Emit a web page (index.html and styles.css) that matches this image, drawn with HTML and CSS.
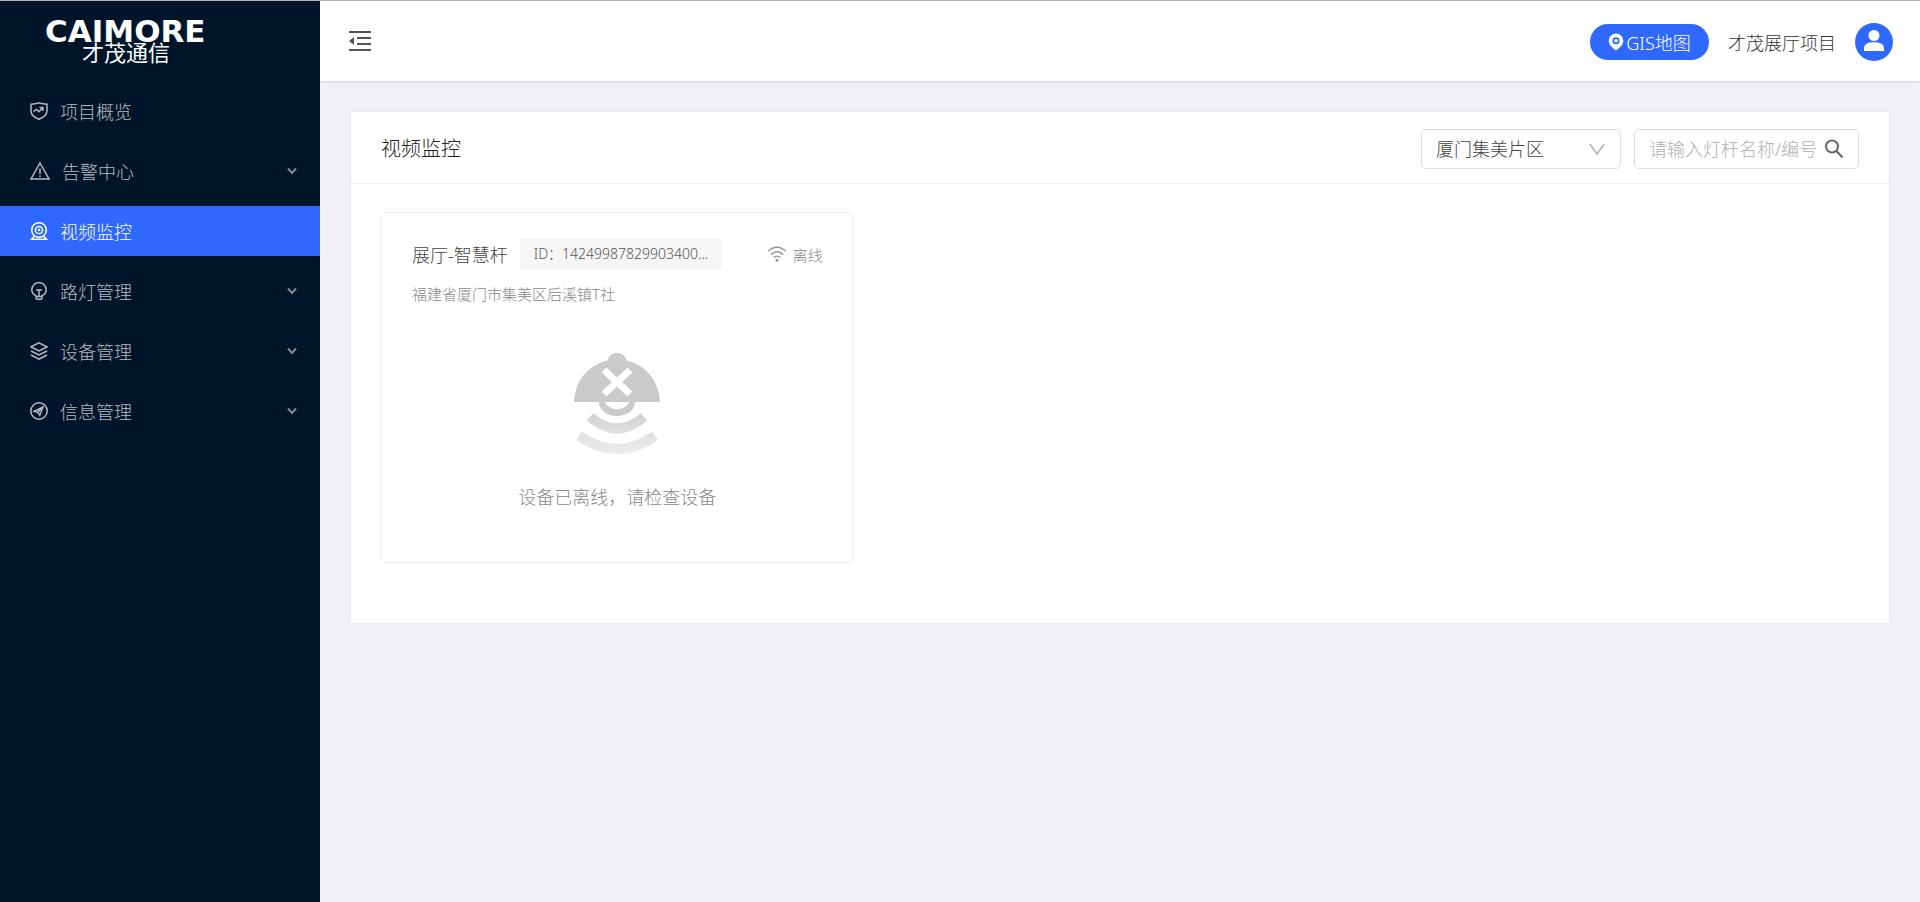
FILE: index.html
```html
<!DOCTYPE html>
<html lang="zh-CN">
<head>
<meta charset="utf-8">
<title>视频监控</title>
<meta name="viewport" content="width=device-width, initial-scale=1">
<link rel="stylesheet" href="styles.css">
</head>
<body>
<div class="app">
  <aside class="sidebar">
    <div class="brand">
      <span class="brand-name">CAIMORE</span>
      <span class="brand-sub">才茂通信</span>
    </div>
    <nav class="menu">
      <a class="menu-item" href="#">
        <svg class="menu-icon" viewBox="0 0 18 18"><path d="M1 2.2Q5.500 2 9 .9Q12.500 2 17 2.200V9C17 13 13 15.800 9 17.200C5 15.800 1 13 1 9Z"/><path d="M3.500 9.500L6.500 7.500L9 9.800L12.500 5.800M9.500 5.500H12.900V9"/></svg>
        <span class="menu-text">项目概览</span>
      </a>
      <a class="menu-item" href="#">
        <svg class="menu-icon menu-icon-wide" viewBox="0 0 20 18"><path d="M10 1L19 17H1Z"/><path d="M10 6.500V12M10 13.300V15"/></svg>
        <span class="menu-text">告警中心</span>
        <svg class="menu-arrow" viewBox="0 0 10 8"><path d="M1 1.500L5 6L9 1.500"/></svg>
      </a>
      <a class="menu-item active" href="#">
        <svg class="menu-icon" viewBox="0 0 18 18"><circle cx="9" cy="8" r="7.300"/><circle cx="9" cy="8" r="3.600"/><path d="M8.800 6.500V8.300H10.300M4.500 14L1.500 17.200H16.500L13.500 14"/></svg>
        <span class="menu-text">视频监控</span>
      </a>
      <a class="menu-item" href="#">
        <svg class="menu-icon" viewBox="0 0 18 18"><path d="M6 13.800C3.300 12.600 1.800 10.400 1.800 7.700A7.200 7.100 0 0 1 16.200 7.700C16.200 10.400 14.700 12.600 12 13.800V16Q12 17.300 10.500 17.300H7.500Q6 17.300 6 16ZM6 14.600H12M6 8H12M9 8V14"/></svg>
        <span class="menu-text">路灯管理</span>
        <svg class="menu-arrow" viewBox="0 0 10 8"><path d="M1 1.500L5 6L9 1.500"/></svg>
      </a>
      <a class="menu-item" href="#">
        <svg class="menu-icon" viewBox="0 0 18 18"><path d="M9 .8L17 4.900L9 9L1 4.900ZM1 9L9 13L17 9M1 13L9 17.200L17 13"/></svg>
        <span class="menu-text">设备管理</span>
        <svg class="menu-arrow" viewBox="0 0 10 8"><path d="M1 1.500L5 6L9 1.500"/></svg>
      </a>
      <a class="menu-item" href="#">
        <svg class="menu-icon" viewBox="0 0 18 18"><circle cx="9" cy="9" r="8.200"/><path d="M13 5L4.200 9.300L7.800 10.300L9.800 13.200ZM7.800 10.300L13 5"/></svg>
        <span class="menu-text">信息管理</span>
        <svg class="menu-arrow" viewBox="0 0 10 8"><path d="M1 1.500L5 6L9 1.500"/></svg>
      </a>
    </nav>
  </aside>

  <div class="main">
    <header class="topbar">
      <button class="fold" type="button" aria-label="收起菜单">
        <svg viewBox="0 0 24 22"><path d="M1 2H23M9 8H23M9 14H23M1 20H23"/><path class="solid" d="M1 11L6 7V15Z"/></svg>
      </button>
      <div class="topbar-right">
        <button class="gis" type="button">
          <svg viewBox="0 0 16 18"><path fill-rule="evenodd" d="M8 .5A7.300 7.300 0 0 1 15.300 7.800C15.300 11.800 11.500 15 8 17.500C4.500 15 .7 11.800 .7 7.800A7.300 7.300 0 0 1 8 .5ZM8 4.300A3.500 3.500 0 1 0 8 11.300A3.500 3.500 0 1 0 8 4.300Z"/><circle cx="8" cy="7.800" r="1.700"/></svg>
          <span>GIS地图</span>
        </button>
        <span class="project">才茂展厅项目</span>
        <button class="avatar" type="button" aria-label="用户">
          <svg viewBox="0 0 38 38"><circle cx="19" cy="12.500" r="5.500"/><path d="M9 28V25.500C9 21 13 19.300 19 19.300S29 21 29 25.500V28Z"/></svg>
        </button>
      </div>
    </header>

    <main class="content">
      <section class="panel">
        <div class="panel-head">
          <h1 class="panel-title">视频监控</h1>
          <div class="filters">
            <div class="select-box">
              <select class="select" aria-label="片区"><option>厦门集美片区</option></select>
              <svg class="select-arrow" viewBox="0 0 16 12"><path d="M.8 1L8 11L15.200 1"/></svg>
            </div>
            <div class="search-box">
              <input class="search" type="text" aria-label="灯杆名称/编号" placeholder="请输入灯杆名称/编号">
              <button class="search-btn" type="button" aria-label="搜索">
                <svg viewBox="0 0 20 20"><circle cx="8" cy="7.500" r="6"/><path d="M12.500 12L18.500 18.500"/></svg>
              </button>
            </div>
          </div>
        </div>
        <div class="grid">
          <article class="card">
            <div class="card-head">
              <h2 class="card-name">展厅-智慧杆</h2>
              <span class="card-id">ID：14249987829903400...</span>
              <span class="status">
                <svg viewBox="0 0 20 16"><path d="M1 5.300Q10-2.700 19 5.300M3.800 8.600Q10 3 16.200 8.600M6.600 11.600Q10 8.800 13.400 11.600"/><circle cx="10" cy="14.300" r="1.500"/></svg>
                <span>离线</span>
              </span>
            </div>
            <p class="address">福建省厦门市集美区后溪镇T社</p>
            <div class="empty">
              <svg class="empty-art" viewBox="0 0 88 102">
                <defs><linearGradient id="wave" x1="0" y1="60" x2="0" y2="102" gradientUnits="userSpaceOnUse"><stop offset="0" stop-color="#d2d2d2"/><stop offset="1" stop-color="#ededed"/></linearGradient></defs>
                <path fill="#cacaca" d="M1 50C2 29 15 13 34.500 8.500C36 3.500 39 1 44 1S52 3.500 53.500 8.500C73 13 86 29 87 50H62A18 14 0 0 1 26 50Z"/>
                <path fill="#fff" d="M32 50H56C53 59.500 35 59.500 32 50Z"/>
                <path stroke="#fff" stroke-width="7" d="M31 18L57 42M57 18L31 42"/>
                <path fill="none" stroke="url(#wave)" stroke-width="10" d="M17 65Q44 88 71 65M6 84Q44 110 82 84"/>
              </svg>
              <p class="empty-text">设备已离线，请检查设备</p>
            </div>
          </article>
        </div>
      </section>
    </main>
  </div>
</div>
</body>
</html>
```
FILE: styles.css
```css
* {
  box-sizing: border-box;
}

body {
  margin: 0;
  font-family: "Noto Sans", "Noto Sans CJK SC", sans-serif;
  font-size: 18px;
  font-weight: 300;
  color: #444;
  background: #f0f0f6;
}

button,
input,
select {
  font: inherit;
  color: inherit;
  border: 0;
  background: none;
  padding: 0;
  margin: 0;
}

button {
  cursor: pointer;
}

h1,
h2,
p {
  margin: 0;
  font-weight: inherit;
}

svg {
  display: block;
  flex: none;
}

.app {
  display: flex;
  min-height: 100vh;
  border-top: 1px solid #b4b7be;
}

/* Sidebar */
.sidebar {
  flex: none;
  width: 320px;
  background: #001529;
}

.brand {
  display: flex;
  flex-direction: column;
  height: 85px;
  padding: 16px 0 0 45px;
  color: #fff;
}

.brand-name {
  font: 700 31px/28px "DejaVu Sans", sans-serif;
}

.brand-sub {
  padding-left: 37px;
  font: 400 22px/18px "Liberation Sans", "Noto Sans CJK SC", sans-serif;
}

.menu {
  display: flex;
  flex-direction: column;
  gap: 10px;
}

.menu-item {
  display: flex;
  align-items: center;
  gap: 12px;
  height: 50px;
  padding: 0 23px 0 30px;
  color: #b4bbc2;
  text-decoration: none;
}

.menu-item.active {
  color: #fff;
  background: #2f68ff;
}

.menu-icon,
.menu-arrow {
  fill: none;
  stroke: currentColor;
}

.menu-icon {
  width: 18px;
  height: 18px;
  stroke-width: 1.5;
}

.menu-icon-wide {
  width: 20px;
}

.menu-text {
  flex: 1;
}

.menu-arrow {
  width: 10px;
  height: 8px;
  stroke-width: 2;
  opacity: 0.7;
}

/* Top bar */
.main {
  flex: 1;
  min-width: 0;
}

.topbar {
  display: flex;
  align-items: center;
  justify-content: space-between;
  height: 80px;
  padding: 0 27px 0 28px;
  background: #fff;
  box-shadow: 0 1px 3px rgba(0, 21, 41, 0.12);
}

.fold svg {
  width: 24px;
  height: 22px;
  fill: none;
  stroke: #555;
  stroke-width: 2;
}

.fold .solid {
  fill: #555;
  stroke: none;
}

.topbar-right {
  display: flex;
  align-items: center;
  gap: 19px;
  padding-top: 2px;
}

.gis {
  display: flex;
  align-items: center;
  justify-content: center;
  gap: 2px;
  width: 119px;
  height: 36px;
  border-radius: 18px;
  color: #fff;
  background: #2f68ff;
}

.gis svg {
  width: 16px;
  height: 18px;
  fill: #fff;
}

.project {
  color: #333;
}

.avatar {
  width: 38px;
  height: 38px;
  border-radius: 50%;
  background: #2f68ff;
}

.avatar svg {
  fill: #fff;
}

/* Panel */
.content {
  padding: 31px 31px 30px;
}

.panel {
  background: #fff;
  box-shadow: 0 0 2px rgba(0, 0, 40, 0.08);
}

.panel-head {
  display: flex;
  align-items: center;
  justify-content: space-between;
  height: 72px;
  padding: 2px 30px 0;
  border-bottom: 1px solid #efefef;
}

.panel-title {
  font-size: 20px;
  line-height: 32px;
  color: #222;
}

.filters {
  display: flex;
  gap: 13px;
}

.select-box {
  display: grid;
  align-items: center;
  width: 200px;
}

.select,
.select-arrow {
  grid-area: 1 / 1;
}

.select,
.search-box {
  height: 40px;
  border: 1px solid #dedede;
  border-radius: 5px;
}

.select {
  width: 100%;
  padding: 0 14px;
  appearance: none;
}

.select-arrow {
  justify-self: end;
  width: 16px;
  height: 12px;
  margin-right: 16px;
  fill: none;
  stroke: #bbb;
  stroke-width: 2;
  pointer-events: none;
}

.search-box {
  display: flex;
  align-items: center;
  width: 225px;
  padding: 0 14px;
}

.search {
  flex: 1;
  min-width: 0;
  outline: 0;
}

.search::placeholder {
  color: #b0b0b0;
  opacity: 1;
}

.search-btn svg {
  width: 20px;
  height: 20px;
  fill: none;
  stroke: #666;
  stroke-width: 2;
}

.grid {
  display: grid;
  grid-template-columns: repeat(3, 1fr);
  gap: 30px;
  padding: 28px 30px 60px;
}

/* Device card */
.card {
  min-height: 351px;
  padding: 26px 30px 48px;
  border: 1px solid #f0f0f0;
  border-radius: 5px;
}

.card-head {
  display: flex;
  align-items: center;
  height: 30px;
}

.card-name {
  font-size: 18px;
  white-space: nowrap;
}

.card-id {
  margin-left: 12px;
  padding: 0 14px;
  font-size: 14px;
  line-height: 30px;
  white-space: nowrap;
  color: #555;
  background: #f6f6f6;
}

.status {
  display: flex;
  align-items: center;
  gap: 6px;
  margin-left: auto;
  font-size: 15px;
  color: #888;
}

.status svg {
  width: 20px;
  height: 16px;
  fill: none;
  stroke: #999;
  stroke-width: 1.5;
}

.status circle {
  fill: #999;
  stroke: none;
}

.address {
  margin-top: 13px;
  font-size: 15px;
  line-height: 24px;
  color: #888;
}

.empty {
  display: flex;
  flex-direction: column;
  align-items: center;
  gap: 30px;
  padding-top: 46px;
}

.empty-art {
  width: 88px;
  height: 102px;
}

.empty-text {
  line-height: 26px;
  color: #888;
}
```
